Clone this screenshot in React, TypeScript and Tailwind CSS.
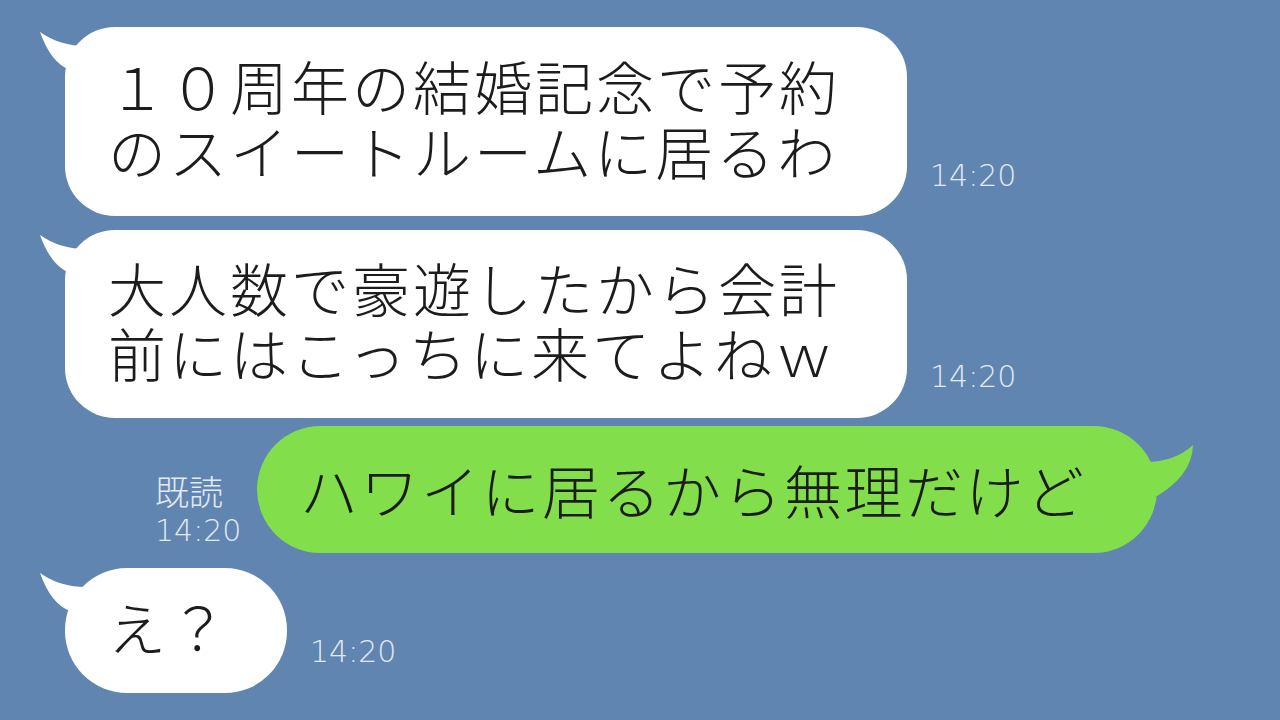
import React from 'react';

const jp = { fontFamily: '"Noto Sans CJK JP", "Noto Sans", sans-serif' };
const ts = { fontFamily: '"DejaVu Sans", "Liberation Sans", sans-serif' };

const LeftTail: React.FC = () => (
  <svg className="absolute left-[-30px] top-0" width="70" height="60" viewBox="0 0 70 60">
    <path d="M5 5 Q26 20 55 19 L55 53 L35 53 L35 43 Q16 36 5 5 Z" fill="#ffffff" />
  </svg>
);

const Stamp: React.FC<{ className?: string }> = ({ className = '' }) => (
  <div className={`text-[30px] leading-[30px] font-extralight text-[#e2eaf4] ${className}`} style={ts}>
    14:20
  </div>
);

const LeftBubble: React.FC<{ lines: string[]; h: string; w: string; round: string; stampMb: string }> = ({
  lines,
  h,
  w,
  round,
  stampMb,
}) => (
  <div className="flex items-end pl-[65px]">
    <div className={`relative flex flex-col justify-center bg-white pl-[43px] pb-[8px] ${w} ${h} ${round}`}>
      <LeftTail />
      {lines.map((l, i) => (
        <div
          key={i}
          className="relative whitespace-nowrap text-[58px] leading-[65px] tracking-[3px] font-light text-[#1c1c1c]"
          style={jp}
        >
          {l}
        </div>
      ))}
    </div>
    <Stamp className={`ml-[23px] ${stampMb}`} />
  </div>
);

export default function App() {
  return (
    <div className="w-[1280px] h-[720px] overflow-hidden bg-[#6185b1] flex flex-col pt-[27px]">
      <LeftBubble
        lines={['１０周年の結婚記念で予約', 'のスイートルームに居るわ']}
        w="w-[842px]"
        h="h-[189px]"
        round="rounded-[50px]"
        stampMb="mb-[25px]"
      />
      <div className="mt-[14px]">
        <LeftBubble
          lines={['大人数で豪遊したから会計', '前にはこっちに来てよねｗ']}
          w="w-[842px]"
          h="h-[188px]"
          round="rounded-[50px]"
          stampMb="mb-[26px]"
        />
      </div>

      {/* own message */}
      <div className="mt-[8px] flex items-end pl-[155px]">
        <div className="w-[102px] mb-[2px] text-[#e2eaf4]">
          <div className="text-[34px] leading-[40px] font-light" style={jp}>
            既読
          </div>
          <div className="text-[30px] leading-[40px] font-extralight" style={ts}>
            14:20
          </div>
        </div>
        <div className="relative flex items-center w-[900px] h-[127px] rounded-full bg-[#82df4b] pl-[43px]">
          <svg className="absolute left-[870px] top-0" width="70" height="80" viewBox="0 0 70 80">
            <path d="M66 19 Q48 36 18 36 L13 74 L23 74 Q65 52 66 19 Z" fill="#82df4b" />
          </svg>
          <div
            className="relative whitespace-nowrap text-[58px] leading-[65px] tracking-[2.5px] font-light text-[#1c1c1c]"
            style={jp}
          >
            ハワイに居るから無理だけど
          </div>
        </div>
      </div>

      <div className="mt-[15px]">
        <LeftBubble lines={['え？']} w="w-[222px]" h="h-[125px]" round="rounded-[62px]" stampMb="mb-[26px]" />
      </div>
    </div>
  );
}
